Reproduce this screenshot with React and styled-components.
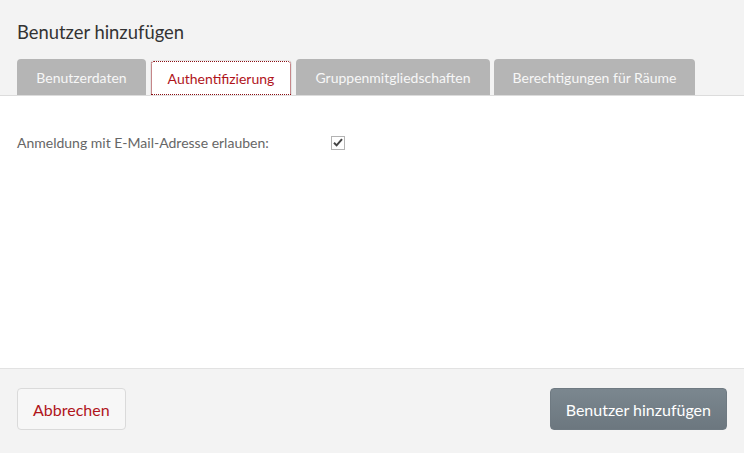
import React from "react";
import styled, { createGlobalStyle } from "styled-components";

const GlobalStyle = createGlobalStyle`
  html, body { margin: 0; padding: 0; }
  body {
    font-family: Lato, "Open Sans", Arial, sans-serif;
    background: #f3f3f3;
  }
`;

const Dialog = styled.div`
  width: 744px;
  height: 453px;
  display: flex;
  flex-direction: column;
  background: #f3f3f3;
`;

const Header = styled.div`
  padding: 21px 17px 0;
  border-bottom: 1px solid #dcdcdc;
`;

const Title = styled.h1`
  margin: 0 0 16px;
  font-size: 18.4px;
  line-height: 22px;
  font-weight: 400;
  color: #333;
`;

const Tabs = styled.div`
  display: flex;
  gap: 4px;
  align-items: flex-end;
`;

const Tab = styled.button`
  flex: none;
  width: ${(p) => p.$width}px;
  height: 36px;
  box-sizing: border-box;
  margin: 0;
  padding: 0;
  border: none;
  border-radius: 4px 4px 0 0;
  background: ${(p) => (p.$active ? "#fff" : "#b5b5b5")};
  box-shadow: ${(p) => (p.$active ? "inset 0 0 0 1px #e4e4e4" : "none")};
  color: ${(p) => (p.$active ? "#b0141b" : "#f7f7f7")};
  font-family: inherit;
  font-size: 14px;
  white-space: nowrap;
  outline: ${(p) => (p.$active ? "1px dotted #8b0f14" : "none")};
  outline-offset: -2px;
  margin-bottom: ${(p) => (p.$active ? "-1px" : "0")};
  cursor: pointer;
`;

const Body = styled.div`
  flex: 1;
  background: #fff;
  padding: 38px 17px;
`;

const FieldRow = styled.div`
  display: grid;
  grid-template-columns: 314px auto;
  align-items: center;
`;

const Label = styled.label`
  font-size: 14px;
  color: #666;
`;

const CheckBox = styled.span`
  width: 14px;
  height: 14px;
  box-sizing: border-box;
  border: 1px solid #b3b3b3;
  background: #fff;
  display: inline-flex;
  align-items: center;
  justify-content: center;
`;

const Footer = styled.div`
  border-top: 1px solid #e2e2e2;
  background: #f3f3f3;
  padding: 19px 17px 0;
  height: 85px;
  box-sizing: border-box;
  display: flex;
  justify-content: space-between;
  align-items: flex-start;
`;

const Button = styled.button`
  height: 42px;
  box-sizing: border-box;
  padding: 0 15px;
  border-radius: 4px;
  font-family: inherit;
  font-size: 16px;
  cursor: pointer;
  border: 1px solid ${(p) => (p.$primary ? "#6f7a82" : "#dadada")};
  background: ${(p) =>
    p.$primary ? "linear-gradient(#7b878f, #6c777f)" : "#f7f7f7"};
  color: ${(p) => (p.$primary ? "#fff" : "#b0141b")};
`;

const tabs = [
  { label: "Benutzerdaten", width: 129 },
  { label: "Authentifizierung", width: 142, active: true },
  { label: "Gruppenmitgliedschaften", width: 194 },
  { label: "Berechtigungen für Räume", width: 201 },
];

export default function App() {
  return (
    <>
      <GlobalStyle />
      <Dialog>
        <Header>
          <Title>Benutzer hinzufügen</Title>
          <Tabs>
            {tabs.map((t) => (
              <Tab key={t.label} $active={t.active} $width={t.width}>
                {t.label}
              </Tab>
            ))}
          </Tabs>
        </Header>
        <Body>
          <FieldRow>
            <Label>Anmeldung mit E-Mail-Adresse erlauben:</Label>
            <CheckBox>
              <svg width="10" height="9" viewBox="0 0 10 9">
                <path
                  d="M1 4.8 L3.6 7.4 L9 1.2"
                  fill="none"
                  stroke="#444"
                  strokeWidth="2"
                />
              </svg>
            </CheckBox>
          </FieldRow>
        </Body>
        <Footer>
          <Button>Abbrechen</Button>
          <Button $primary>Benutzer hinzufügen</Button>
        </Footer>
      </Dialog>
    </>
  );
}
